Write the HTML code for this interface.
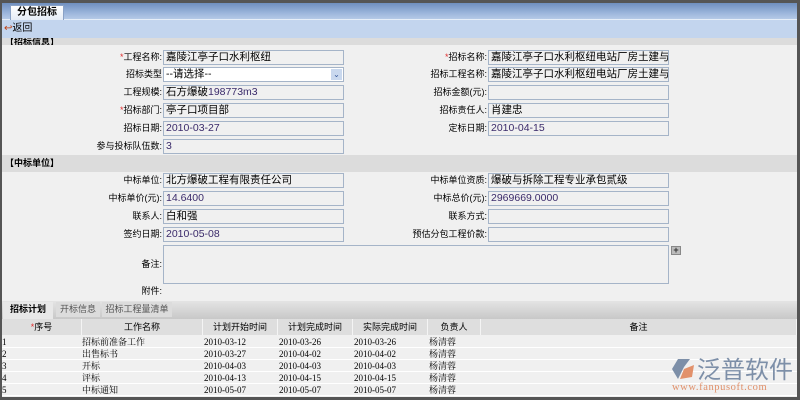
<!DOCTYPE html>
<html><head><meta charset="utf-8"><style>
*{margin:0;padding:0;box-sizing:border-box}
body{width:800px;height:400px;overflow:hidden;background:#f0f0f0;font-family:"Liberation Sans","Noto Sans CJK SC",sans-serif;font-size:9px;color:#000;position:relative}
.a{position:absolute}
.lbl{position:absolute;text-align:right;font-size:9px;line-height:15px;white-space:nowrap}
.box{position:absolute;height:15px;border:1px solid #a5b4c8;background:#f0f0f0;font-size:10.5px;line-height:13px;padding-left:2px;white-space:nowrap;overflow:hidden;color:#000}
.n{color:#3a2a6a}
.req{color:#e03030}
.sec{position:absolute;left:2px;right:3px;background:#dcdcdc;font-weight:bold;font-size:9px;line-height:16px;padding-left:3px}
.th{position:absolute;top:319px;height:16px;background:#dedede;text-align:center;line-height:16px;font-size:9px;border-right:1px solid #f4f4f4}
.row{position:absolute;left:2px;right:3px;height:12px;border-bottom:1px solid #fff;font-family:"Liberation Serif","Noto Serif CJK SC",serif;font-size:9px;line-height:12px}
.row span{position:absolute;top:0}
</style></head><body>
<div class="a" style="left:0;top:0;width:800px;height:3px;background:#555"></div>
<div class="a" style="left:0;top:0;width:2px;height:400px;background:#555"></div>
<div class="a" style="right:0;top:0;width:3px;height:400px;background:#555"></div>
<div class="a" style="left:0;bottom:0;width:800px;height:3px;background:#555"></div>
<div class="a" style="left:2px;top:3px;width:795px;height:17px;background:linear-gradient(#6f8fbf,#9cb6dc 60%,#b9cde8)"></div>
<div class="a" style="left:2px;top:19px;width:795px;height:1px;background:#e6eef8"></div>
<div class="a" style="left:10px;top:5px;width:54px;height:15px;background:linear-gradient(#fff,#e4ecf6);border:1px solid #8aa2c6;border-bottom:none;font-weight:bold;font-size:10px;text-align:center;line-height:14px">分包招标</div>
<div class="a" style="left:2px;top:20px;width:795px;height:18px;background:#c3d5ee"></div>
<div class="a" style="left:4px;top:23px;font-size:10px;line-height:12px"><span style="color:#c04010">↩</span>返回</div>
<div class="sec" style="top:38px;height:7px;line-height:8px;overflow:hidden">【招标信息】</div>

<div class="lbl" style="right:638px;top:50px"><span class="req">*</span>工程名称:</div>
<div class="box" style="left:163px;top:50px;width:181px">嘉陵江亭子口水利枢纽</div>
<div class="lbl" style="right:638px;top:67px">招标类型</div>
<div class="box" style="left:163px;top:67px;width:181px;background:#fff;color:#000">--请选择--<span style="position:absolute;right:1px;top:1px;width:11px;height:11px;background:#c9d8ee;color:#3a5a9a;font-size:8px;line-height:11px;text-align:center">⌄</span></div>
<div class="lbl" style="right:638px;top:85px">工程规模:</div>
<div class="box" style="left:163px;top:85px;width:181px">石方爆破<span class="n">198773m3</span></div>
<div class="lbl" style="right:638px;top:103px"><span class="req">*</span>招标部门:</div>
<div class="box" style="left:163px;top:103px;width:181px">亭子口项目部</div>
<div class="lbl" style="right:638px;top:121px">招标日期:</div>
<div class="box n" style="left:163px;top:121px;width:181px">2010-03-27</div>
<div class="lbl" style="right:638px;top:139px">参与投标队伍数:</div>
<div class="box n" style="left:163px;top:139px;width:181px">3</div>

<div class="lbl" style="right:313px;top:50px"><span class="req">*</span>招标名称:</div>
<div class="box" style="left:488px;top:50px;width:181px">嘉陵江亭子口水利枢纽电站厂房土建与金属</div>
<div class="lbl" style="right:313px;top:67px">招标工程名称:</div>
<div class="box" style="left:488px;top:67px;width:181px">嘉陵江亭子口水利枢纽电站厂房土建与金属</div>
<div class="lbl" style="right:313px;top:85px">招标金额(元):</div>
<div class="box" style="left:488px;top:85px;width:181px"></div>
<div class="lbl" style="right:313px;top:103px">招标责任人:</div>
<div class="box" style="left:488px;top:103px;width:181px">肖建忠</div>
<div class="lbl" style="right:313px;top:121px">定标日期:</div>
<div class="box n" style="left:488px;top:121px;width:181px">2010-04-15</div>

<div class="sec" style="top:155px;height:17px">【中标单位】</div>
<div class="lbl" style="right:638px;top:173px">中标单位:</div>
<div class="box" style="left:163px;top:173px;width:181px">北方爆破工程有限责任公司</div>
<div class="lbl" style="right:638px;top:191px">中标单价(元):</div>
<div class="box n" style="left:163px;top:191px;width:181px">14.6400</div>
<div class="lbl" style="right:638px;top:209px">联系人:</div>
<div class="box" style="left:163px;top:209px;width:181px">白和强</div>
<div class="lbl" style="right:638px;top:227px">签约日期:</div>
<div class="box n" style="left:163px;top:227px;width:181px">2010-05-08</div>
<div class="lbl" style="right:313px;top:173px">中标单位资质:</div>
<div class="box" style="left:488px;top:173px;width:181px">爆破与拆除工程专业承包贰级</div>
<div class="lbl" style="right:313px;top:191px">中标总价(元):</div>
<div class="box n" style="left:488px;top:191px;width:181px">2969669.0000</div>
<div class="lbl" style="right:313px;top:209px">联系方式:</div>
<div class="box" style="left:488px;top:209px;width:181px"></div>
<div class="lbl" style="right:313px;top:227px">预估分包工程价款:</div>
<div class="box" style="left:488px;top:227px;width:181px"></div>
<div class="lbl" style="right:638px;top:257px">备注:</div>
<div class="box" style="left:163px;top:245px;width:506px;height:39px"></div>
<div class="a" style="left:671px;top:246px;width:10px;height:9px;background:#bbb;border:1px solid #888;color:#333;font-size:9px;line-height:7px;text-align:center;font-weight:bold">+</div>
<div class="lbl" style="right:638px;top:284px">附件:</div>

<div class="a" style="left:2px;top:301px;width:795px;height:18px;background:linear-gradient(#e4e4e4,#c8c8c8)"></div>
<div class="a" style="left:3px;top:302px;width:50px;height:17px;background:#e8e8e8;font-weight:bold;text-align:center;line-height:15px;font-size:9px">招标计划</div>
<div class="a" style="left:56px;top:302px;width:44px;height:15px;background:#dcdcdc;color:#555;text-align:center;line-height:15px;font-size:9px">开标信息</div>
<div class="a" style="left:102px;top:302px;width:70px;height:15px;background:#dcdcdc;color:#555;text-align:center;line-height:15px;font-size:9px">招标工程量清单</div>

<div class="th" style="left:2px;width:80px"><span class="req">*</span>序号</div>
<div class="th" style="left:82px;width:121px">工作名称</div>
<div class="th" style="left:203px;width:75px">计划开始时间</div>
<div class="th" style="left:278px;width:75px">计划完成时间</div>
<div class="th" style="left:353px;width:75px">实际完成时间</div>
<div class="th" style="left:428px;width:53px">负责人</div>
<div class="th" style="left:481px;width:316px">备注</div>

<div class="row" style="top:336px"><span style="left:0">1</span><span style="left:80px">招标前准备工作</span><span style="left:202px">2010-03-12</span><span style="left:277px">2010-03-26</span><span style="left:352px">2010-03-26</span><span style="left:427px">杨清蓉</span></div>
<div class="row" style="top:348px"><span style="left:0">2</span><span style="left:80px">出售标书</span><span style="left:202px">2010-03-27</span><span style="left:277px">2010-04-02</span><span style="left:352px">2010-04-02</span><span style="left:427px">杨清蓉</span></div>
<div class="row" style="top:360px"><span style="left:0">3</span><span style="left:80px">开标</span><span style="left:202px">2010-04-03</span><span style="left:277px">2010-04-03</span><span style="left:352px">2010-04-03</span><span style="left:427px">杨清蓉</span></div>
<div class="row" style="top:372px"><span style="left:0">4</span><span style="left:80px">评标</span><span style="left:202px">2010-04-13</span><span style="left:277px">2010-04-15</span><span style="left:352px">2010-04-15</span><span style="left:427px">杨清蓉</span></div>
<div class="row" style="top:384px"><span style="left:0">5</span><span style="left:80px">中标通知</span><span style="left:202px">2010-05-07</span><span style="left:277px">2010-05-07</span><span style="left:352px">2010-05-07</span><span style="left:427px">杨清蓉</span></div>

<svg class="a" style="left:670px;top:357px" width="28" height="24" viewBox="0 0 28 24"><path d="M8 2 L20 2 L14 10 L8 22 L2 12 Z" fill="#7d8fa8"/><path d="M14 12 L24 8 L22 20 L10 22 Z" fill="#e2916b"/></svg>
<div class="a" style="left:697px;top:354px;font-size:24px;line-height:28px;color:#7d8fa8;letter-spacing:0;font-family:'Noto Sans CJK SC',sans-serif">泛普软件</div>
<div class="a" style="left:672px;top:382px;font-size:10.5px;line-height:11px;color:#e0906a;font-family:'Liberation Serif',serif;letter-spacing:0.6px">www.fanpusoft.com</div>
</body></html>
